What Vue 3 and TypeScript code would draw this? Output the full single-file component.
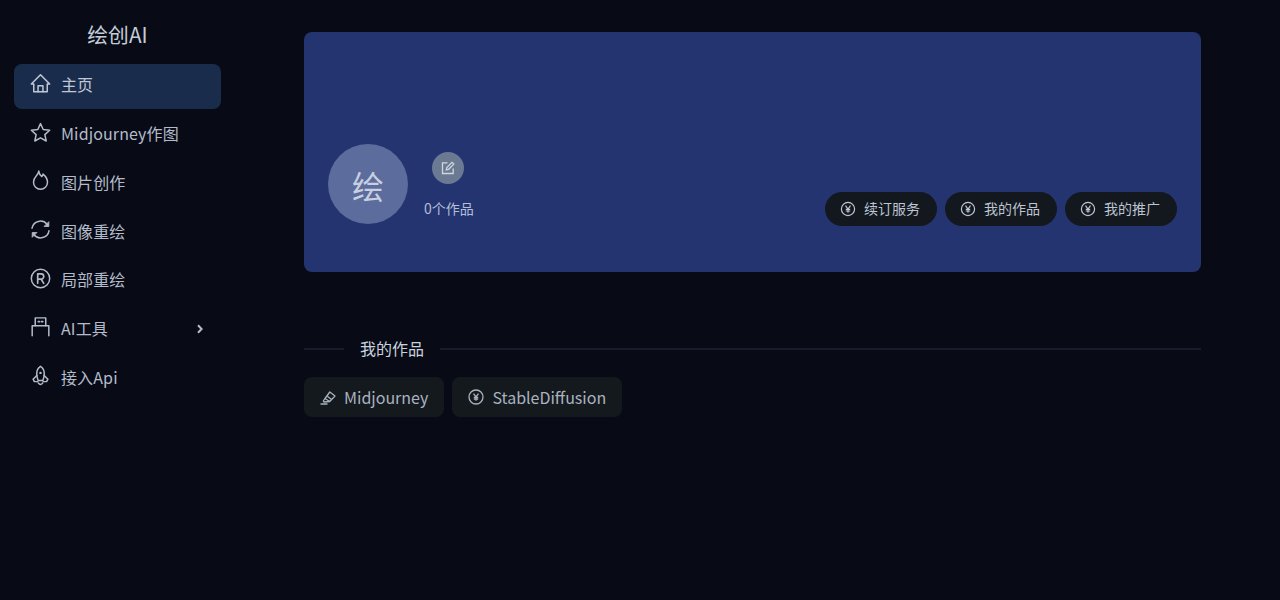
<script setup lang="ts">
type Item = { label: string; icon: string; active?: boolean; arrow?: boolean }
const items: Item[] = [
  { label: '主页', icon: 'home', active: true },
  { label: 'Midjourney作图', icon: 'star' },
  { label: '图片创作', icon: 'flame' },
  { label: '图像重绘', icon: 'sync' },
  { label: '局部重绘', icon: 'reg' },
  { label: 'AI工具', icon: 'usb', arrow: true },
  { label: '接入Api', icon: 'rocket' },
]
const pills = ['续订服务', '我的作品', '我的推广']
</script>

<template>
  <div class="page">
    <aside class="side">
      <div class="logo">绘创AI</div>
      <nav class="nav">
        <div v-for="it in items" :key="it.label" class="item" :class="{ active: it.active }">
          <svg class="ico" viewBox="0 0 24 24" fill="none" stroke="currentColor" stroke-width="1.7" stroke-linejoin="round" stroke-linecap="round">
            <template v-if="it.icon === 'home'">
              <path d="M1.500 12.500 12 2l10.500 10.500h-2.800v9h-15.400v-9z" />
              <path d="M9.200 21.500v-6.800h5.600v6.800" />
            </template>
            <path v-else-if="it.icon === 'star'" d="m12 1.800 3.100 6.800 7.400.8-5.500 5 1.500 7.300L12 18.100l-6.500 3.600L7 14.400l-5.500-5 7.400-.8z" />
            <path v-else-if="it.icon === 'flame'" d="M10 1.200c.5 3 1.800 5 3.500 6.300.7-.9 1.100-1.700 1.400-2.800 3 2.500 5.100 5.500 5.100 9.300a8 8 0 0 1-16 0c0-3.500 1.500-5.500 3.300-7.500C8.700 5 9.800 3.500 10 1.200z" />
            <template v-else-if="it.icon === 'sync'">
              <path d="M2.300 10.500A9.800 9.800 0 0 1 19.500 6" />
              <path d="M21.700 13.500A9.800 9.800 0 0 1 4.500 18" />
              <path d="M21.500 3.500v5h-5z" fill="currentColor" stroke-width="1" />
              <path d="M2.500 20.500v-5h5z" fill="currentColor" stroke-width="1" />
            </template>
            <template v-else-if="it.icon === 'reg'">
              <circle cx="12" cy="12" r="10.500" />
              <path d="M8.800 17.500V6.800h3.900a3 3 0 0 1 0 6H8.800m4 0 2.900 4.700" stroke-width="1.900" />
            </template>
            <template v-else-if="it.icon === 'usb'">
              <path d="M2.500 21.500v-11.500h19v11.500" />
              <path d="M6 10V1h12v9" />
              <path d="M9.500 5.200h1.300M13.200 5.200h1.300" stroke-width="2" />
            </template>
            <template v-else>
              <path d="M12 1.500c3 2 4.300 5 4.300 8.200 0 3-.8 6-1.600 8H9.300c-.8-2-1.600-5-1.600-8 0-3.200 1.300-6.200 4.300-8.200z" />
              <path d="M7.800 12 3.500 16.200l1.500 2.800h4M16.200 12l4.300 4.200-1.500 2.800h-4" />
              <path d="M9.500 20.500c.8 1 1.600 1.700 2.500 1.700s1.700-.7 2.500-1.700" />
              <circle cx="12" cy="9" r="1.400" fill="currentColor" stroke="none" />
            </template>
          </svg>
          <span class="lbl">{{ it.label }}</span>
          <svg v-if="it.arrow" class="chev" viewBox="0 0 10 10" fill="none" stroke="currentColor" stroke-width="2">
            <path d="m3 1.300 3.600 3.700L3 8.700" />
          </svg>
        </div>
      </nav>
    </aside>

    <main class="main">
      <section class="card">
        <div class="user">
          <div class="avatar"><span class="initial">绘</span></div>
          <div class="meta">
            <button class="edit" type="button">
              <svg viewBox="0 0 16 16" width="16" height="16" fill="none" stroke="currentColor" stroke-width="1.300">
                <path d="M7.500 2.800H2.500v10.700h10.700V8.500" />
                <path d="M6.300 9.800l.5-2.300L12 2.300l1.800 1.800-5.200 5.200z" />
              </svg>
            </button>
            <div class="count">0个作品</div>
          </div>
        </div>
        <div class="pills">
          <div v-for="p in pills" :key="p" class="pill">
            <svg class="yen pill-yen" viewBox="0 0 16 16" fill="none" stroke="currentColor" stroke-width="1.200">
              <circle cx="8" cy="8" r="6.600" />
              <path d="m5.500 4.600 2.500 3.400 2.500-3.400M8 8v3.800M5.800 8.300h4.400M5.800 10h4.400" />
            </svg>
            <span>{{ p }}</span>
          </div>
        </div>
      </section>

      <div class="divider"><span class="dtext">我的作品</span></div>

      <div class="tabs">
        <div class="tab">
          <svg class="yen" viewBox="0 0 16 16" fill="none" stroke="currentColor" stroke-width="1.300" stroke-linejoin="round">
            <path d="M5 9.500 9.800 3l5.200 4-5.300 5.500z" />
            <path d="M5 9.500 3.300 12l.8 1 5.600-.5M.5 15h7" />
            <path d="m7.300 7.300 4 3" />
          </svg>
          <span>Midjourney</span>
        </div>
        <div class="tab">
          <svg class="yen" viewBox="0 0 16 16" fill="none" stroke="currentColor" stroke-width="1.300">
            <circle cx="8" cy="8" r="7" />
            <path d="m5.500 4.600 2.500 3.400 2.500-3.400M8 8v3.800M5.800 8.300h4.400M5.800 10h4.400" />
          </svg>
          <span>StableDiffusion</span>
        </div>
      </div>
    </main>
  </div>
</template>

<style>
html, body { background: #080b16; }
</style>

<style scoped>
.page {
  display: flex;
  height: 600px;
  background: #080b16;
  font-family: "Noto Sans CJK SC", "Noto Sans", sans-serif;
  color: #c7d0e0;
}
.side { width: 234px; flex: none; padding: 0 13px 0 14px; box-sizing: border-box; }
.logo { height: 64px; padding-top: 4px; box-sizing: border-box; display: flex; align-items: center; justify-content: center; font-size: 20.800px; color: #c5ccd9; }
.nav { display: flex; flex-direction: column; gap: 4px; }
.item {
  height: 44.800px; display: flex; align-items: center; padding: 0 16px 4.400px; box-sizing: border-box;
  border-radius: 8px; font-size: 16px; letter-spacing: .12px; color: #b4bccb;
}
.item.active { background: #1a2c4c; color: #c0c8d6; }
.ico { width: 21px; height: 21px; flex: none; margin-right: 10px; margin-top: -2px; }
.lbl { flex: 1; white-space: nowrap; }
.chev { width: 10px; height: 10px; flex: none; margin-top: 1px; }

.main { flex: 1; padding: 32px 79px 0 70px; min-width: 0; }
.card {
  height: 240px; box-sizing: border-box; background: #243470; border-radius: 8px;
  padding: 0 24px; display: flex; justify-content: space-between; align-items: flex-end;
}
.user { display: flex; align-items: flex-end; gap: 16px; padding-bottom: 48px; }
.avatar {
  width: 80px; height: 80px; border-radius: 50%; background: #5c6c9c; color: #c8cfe0;
  display: flex; align-items: center; justify-content: center; font-size: 32px;
}
.initial { padding-top: 2px; }
.meta { display: flex; flex-direction: column; align-items: flex-start; gap: 14px; padding-bottom: 6px; }
.edit {
  width: 32px; height: 32px; margin-left: 8px; border-radius: 50%; border: 0; padding: 0; background: #6b7a92; color: #d0d6e0;
  display: flex; align-items: center; justify-content: center;
}
.count { font-size: 14px; line-height: 20px; color: #b3bfd6; }
.pills { display: flex; gap: 8px; padding-bottom: 46px; }
.pill {
  width: 112px; height: 34px; border-radius: 17px; background: #12181e; color: #bdc4d2;
  display: flex; align-items: center; justify-content: center; font-size: 14px; gap: 8px; box-sizing: border-box; padding: 0 2px 2px 0;
}
.yen { width: 16px; height: 16px; flex: none; }
.pill-yen { margin-top: 2px; }
.divider {
  margin-top: 64px; height: 26px; display: flex; align-items: center; font-size: 16px; color: #cbd2de;
}
.divider::before { content: ""; width: 40px; height: 2px; background: #171b2b; }
.divider::after { content: ""; flex: 1; height: 2px; background: #171b2b; }
.dtext { padding: 0 16px 2px; line-height: 26px; white-space: nowrap; }
.tabs { display: flex; gap: 8px; margin-top: 15px; }
.tab {
  height: 40px; padding: 0 16px; box-sizing: border-box; border-radius: 8px; background: #13191d; color: #aab2c0;
  display: flex; align-items: center; gap: 8px; font-size: 16px; white-space: nowrap;
}
</style>
